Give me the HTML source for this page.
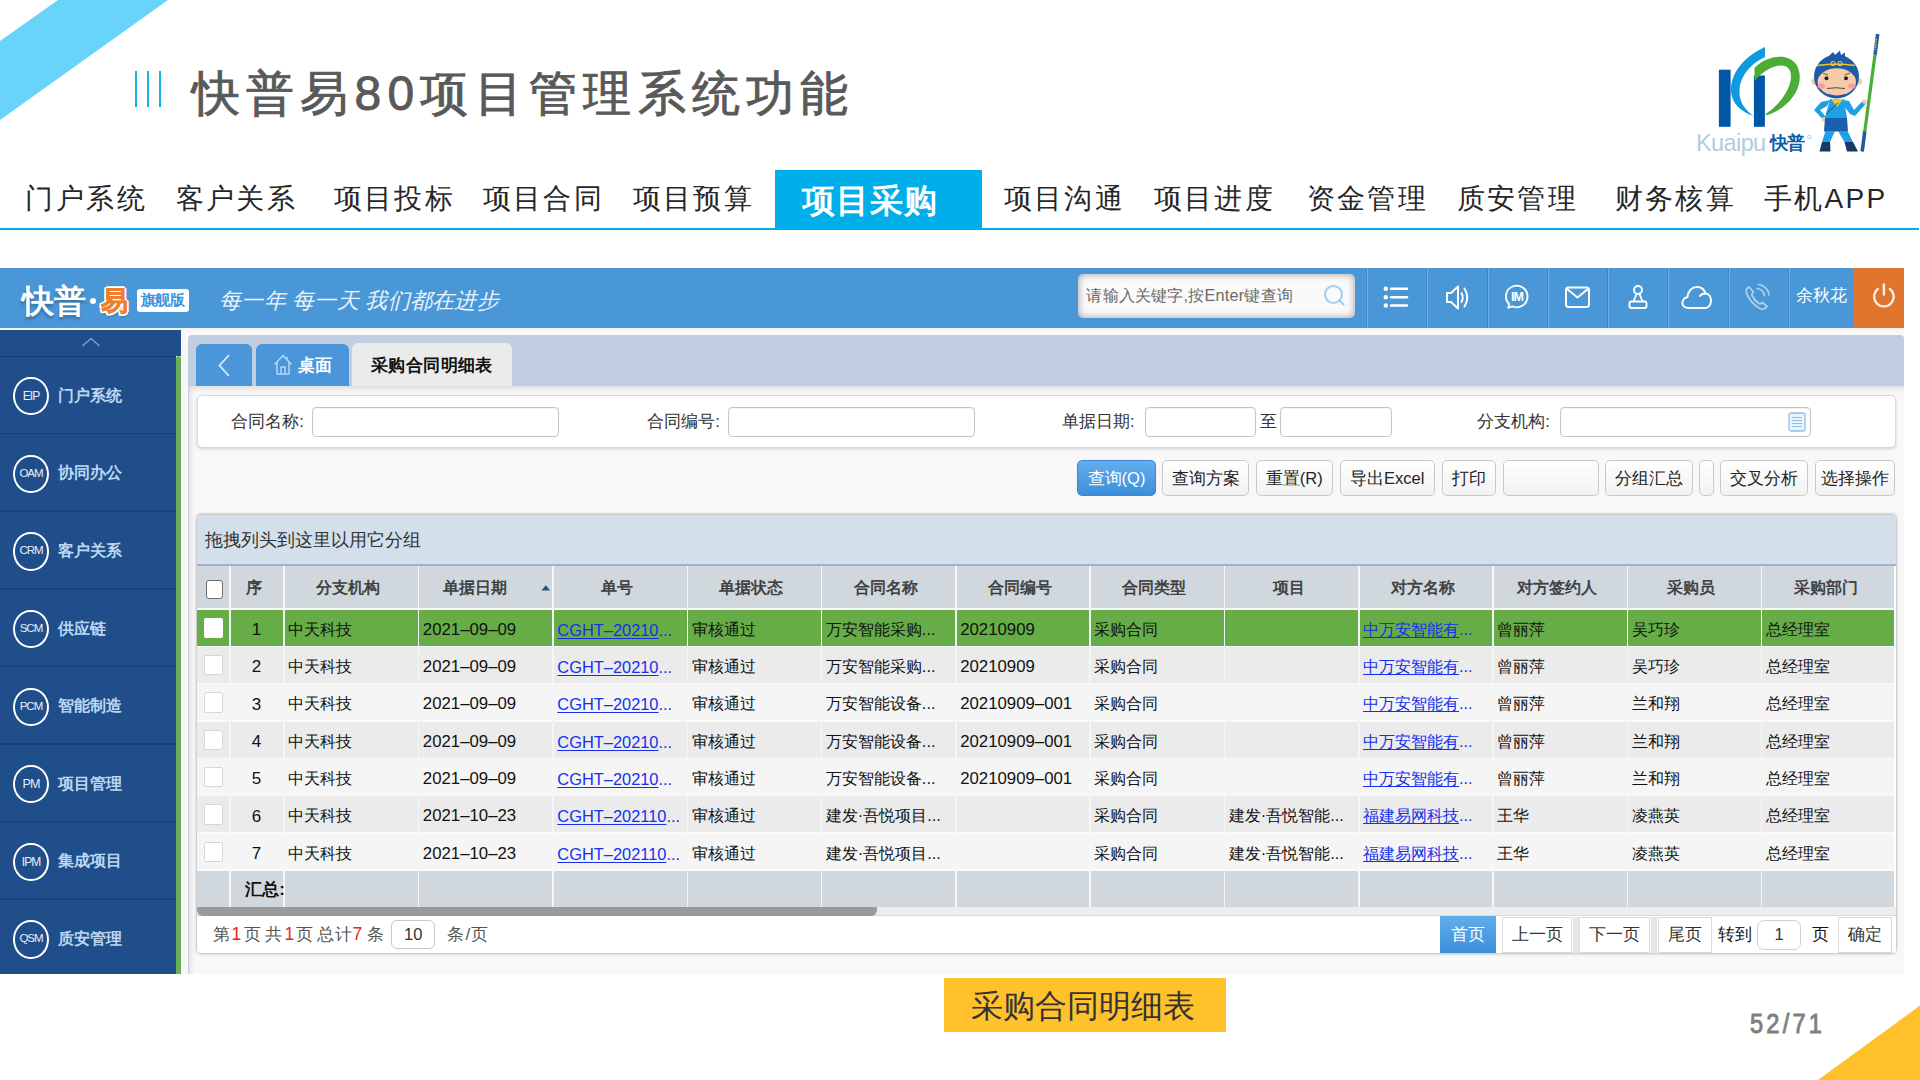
<!DOCTYPE html>
<html><head><meta charset="utf-8"><title>快普易80项目管理系统功能</title>
<style>
html,body{margin:0;padding:0;}
body{width:1920px;height:1080px;position:relative;overflow:hidden;background:#fff;font-family:"Liberation Sans",sans-serif;}
.t{position:absolute;white-space:nowrap;}
.r{position:absolute;box-sizing:border-box;}
svg{position:absolute;overflow:visible;}
</style></head><body>

<svg style="left:0;top:0" width="1920" height="1080"><polygon points="58,0 168,0 0,120 0,41" fill="#69D4FA"/><polygon points="1818,1080 1920,1005.6 1920,1080" fill="#FFC12B"/></svg>
<div class="r" style="left:134.50px;top:71.00px;width:2.00px;height:36.00px;background:#19B1EB;"></div>
<div class="r" style="left:146.50px;top:71.00px;width:2.00px;height:36.00px;background:#19B1EB;"></div>
<div class="r" style="left:158.50px;top:71.00px;width:2.00px;height:36.00px;background:#19B1EB;"></div>
<div class="t" style="left:191.50px;top:70.00px;font-size:48px;line-height:48px;color:#595959;font-weight:normal;letter-spacing:6.3px;-webkit-text-stroke:0.9px #595959">快普易80项目管理系统功能</div>
<div class="r" style="left:775.00px;top:170.00px;width:207.00px;height:59.00px;background:#00AEEA;"></div>
<div class="r" style="left:0.00px;top:227.50px;width:1919.00px;height:2.00px;background:#00AEEA;"></div>
<div class="t" style="left:25.48px;top:185.30px;font-size:28px;line-height:28px;color:#262626;font-weight:normal;letter-spacing:2.4px;">门户系统</div>
<div class="t" style="left:175.68px;top:185.30px;font-size:28px;line-height:28px;color:#262626;font-weight:normal;letter-spacing:2.4px;">客户关系</div>
<div class="t" style="left:333.68px;top:185.30px;font-size:28px;line-height:28px;color:#262626;font-weight:normal;letter-spacing:2.4px;">项目投标</div>
<div class="t" style="left:482.68px;top:185.30px;font-size:28px;line-height:28px;color:#262626;font-weight:normal;letter-spacing:2.4px;">项目合同</div>
<div class="t" style="left:632.68px;top:185.30px;font-size:28px;line-height:28px;color:#262626;font-weight:normal;letter-spacing:2.4px;">项目预算</div>
<div class="t" style="left:1003.68px;top:185.30px;font-size:28px;line-height:28px;color:#262626;font-weight:normal;letter-spacing:2.4px;">项目沟通</div>
<div class="t" style="left:1153.68px;top:185.30px;font-size:28px;line-height:28px;color:#262626;font-weight:normal;letter-spacing:2.4px;">项目进度</div>
<div class="t" style="left:1306.68px;top:185.30px;font-size:28px;line-height:28px;color:#262626;font-weight:normal;letter-spacing:2.4px;">资金管理</div>
<div class="t" style="left:1456.68px;top:185.30px;font-size:28px;line-height:28px;color:#262626;font-weight:normal;letter-spacing:2.4px;">质安管理</div>
<div class="t" style="left:1614.68px;top:185.30px;font-size:28px;line-height:28px;color:#262626;font-weight:normal;letter-spacing:2.4px;">财务核算</div>
<div class="t" style="left:1763.68px;top:185.30px;font-size:28px;line-height:28px;color:#262626;font-weight:normal;letter-spacing:2.4px;">手机APP</div>
<div class="t" style="left:801.68px;top:183.50px;font-size:33px;line-height:33px;color:#fff;font-weight:bold;letter-spacing:1px;">项目采购</div>
<svg style="left:1690px;top:30px" width="200" height="135" viewBox="0 0 200 135">
<rect x="28.9" y="39.7" width="11.7" height="57.1" fill="#0057A8"/>
<path d="M75 17 L75 27 C62 33 50 45 49.5 61 C49 72 55 80 63.5 86 C51 82 41.5 73 41 61 C40.5 44 53 27 75 17 Z" fill="#0D9AE0"/>
<rect x="63.9" y="45.5" width="11" height="51.3" fill="#0057A8"/>
<path d="M64.5 38 C72 30 84 26 94 27 C106 29 111 39 109.5 51 C107.5 66 94 80 76 85.5 L75.5 84 C88 76 98 63 100.5 51 C102.5 41 98 35 91 35.5 C82 36 72 42 64.5 51 Z" fill="#4BAD35"/>
<text x="6" y="120.5" font-family="Liberation Sans" font-size="23.5" fill="#B5CCDD" letter-spacing="-0.6">Kuaipu</text>
<text x="79.5" y="119" font-size="17.5" font-weight="bold" fill="#0A5BAA" letter-spacing="-0.3">快普</text>
<circle cx="119.5" cy="107" r="1.8" fill="none" stroke="#9BB9D6" stroke-width="0.7"/>
<!-- staff -->
<line x1="187.7" y1="4" x2="185" y2="24.8" stroke="#1E5BA5" stroke-width="3.6"/>
<line x1="185" y1="24.8" x2="174.8" y2="101.3" stroke="#4BAD35" stroke-width="3.2"/>
<line x1="174.8" y1="101.3" x2="172.2" y2="121.4" stroke="#1E5BA5" stroke-width="3.6"/>
<path d="M186.5 9 L185 20" stroke="#E6C23A" stroke-width="1.4" stroke-dasharray="1.5 1"/>
<!-- arms -->
<path d="M140 70 L131 72 L124 80 L133.5 90 L136 87 L130 80 L137 76 Z" fill="#1FA0E6"/>
<path d="M153 70 L159 71 L164 80 L173 70.5 L176 73.5 L165 86 L160 84 L154 76 Z" fill="#1FA0E6"/>
<circle cx="133.8" cy="89.5" r="2.2" fill="#F7CBA8"/><circle cx="174.5" cy="71.5" r="2.3" fill="#F7CBA8"/>
<!-- torso -->
<path d="M140 69 L154 69 L157 88 L135 88 Z" fill="#1FA0E6"/>
<path d="M135 88 L157 88 L158 101.5 L134 101.5 Z" fill="#1A5EB0"/>
<path d="M135.5 101 L145 101 L140 112 L132 112 Z M148 101 L157.5 101 L163 112 L154.5 112 Z" fill="#1FA0E6"/>
<path d="M132 112 L140 112 L140.5 121.4 L129.5 121.4 Z M154.5 112 L163 112 L168 121.4 L157 121.4 Z" fill="#163A63"/>
<path d="M141 69 L153.3 69 L147 77 Z" fill="#F2C530"/>
<path d="M136 84 L148 73" stroke="#163A63" stroke-width="0.8"/>
<!-- head -->
<path d="M139 26 L143 22 L145 25 L150 20.5 L151 25 L155 22.5 L155 28 Z" fill="#1E5BA5"/>
<circle cx="124.5" cy="51.5" r="3.2" fill="#F7CBA8"/><circle cx="169" cy="51.5" r="3.2" fill="#F7CBA8"/>
<ellipse cx="146.5" cy="46.5" rx="22.5" ry="22" fill="#1E5BA5"/>
<ellipse cx="146.8" cy="51.8" rx="19.2" ry="13.6" fill="#F7CBA8"/>
<path d="M127 35.5 Q146.5 33 165 35.5" stroke="#F2C530" stroke-width="1.6" fill="none"/>
<circle cx="143" cy="33.5" r="2" fill="none" stroke="#F2C530" stroke-width="1.1"/><circle cx="150" cy="33.5" r="2" fill="none" stroke="#F2C530" stroke-width="1.1"/>
<circle cx="136.5" cy="48.2" r="2" fill="#222"/><circle cx="156" cy="48.2" r="2" fill="#222"/>
<path d="M132.5 43 L138 45 M160 43 L154.5 45" stroke="#3A3A3A" stroke-width="0.8"/>
<ellipse cx="131.3" cy="56" rx="3.8" ry="2.6" fill="#F59DA2"/><ellipse cx="161.8" cy="56" rx="3.8" ry="2.6" fill="#F59DA2"/>
<path d="M137 58.5 Q146 57 155 58.5" stroke="#3A3A3A" stroke-width="0.9" fill="none"/>
</svg>
<div class="r" style="left:0.00px;top:328.00px;width:1904.00px;height:645.50px;background:#F8F8F8;"></div>
<div class="r" style="left:0.00px;top:268.00px;width:1904.00px;height:60.00px;background:#4A97D7;"></div>
<div class="r" style="left:0.00px;top:328.00px;width:1904.00px;height:2.00px;background:#F0F4F8;"></div>
<div class="t" style="left:22px;top:281px;font-size:32px;line-height:40px;color:#fff;font-weight:bold;text-shadow:0 3px 3px rgba(0,0,0,0.25)">快普</div>
<div class="r" style="left:90.00px;top:298.00px;width:6.00px;height:6.00px;background:#fff;border-radius:3px"></div>
<div class="t" style="left:100.5px;top:284px;font-size:26.5px;line-height:34px;color:#EF7F2C;font-weight:bold;-webkit-text-stroke:0px;-webkit-text-stroke:0.6px #EF7F2C;text-shadow:1.5px 1.5px 0 #fff,-1.5px -1.5px 0 #fff,1.5px -1.5px 0 #fff,-1.5px 1.5px 0 #fff,0 2px 0 #fff,2px 0 0 #fff,-2px 0 0 #fff,0 -2px 0 #fff,0 3px 3px rgba(0,0,0,.3)">易</div>
<div class="r" style="left:137.00px;top:289.00px;width:52.00px;height:22.50px;background:#fff;border-radius:3px"></div>
<div class="t" style="left:140.92px;top:293.25px;font-size:14.5px;line-height:14.5px;color:#3D96DC;font-weight:bold;letter-spacing:-0.5px;">旗舰版</div>
<div class="t" style="left:219.12px;top:289.80px;font-size:22px;line-height:22px;color:#F4F8FC;font-weight:300;letter-spacing:0.25px;font-style:italic;opacity:.95">每一年&nbsp;每一天&nbsp;我们都在进步</div>
<div class="r" style="left:1078.00px;top:274.00px;width:277.00px;height:43.50px;background:#FAFAFA;border-radius:5px;box-shadow:inset 0 0 7px 1px rgba(0,0,0,.32)"></div>
<div class="t" style="left:1086.35px;top:286.65px;font-size:16.3px;line-height:16.3px;color:#6A6A6A;font-weight:normal;letter-spacing:0.2px;">请输入关键字,按Enter键查询</div>
<svg style="left:1323px;top:284px" width="24" height="24"><circle cx="10.5" cy="10.5" r="8.5" fill="none" stroke="#9FCDF0" stroke-width="2"/><line x1="16.5" y1="16.5" x2="20.5" y2="20.5" stroke="#9FCDF0" stroke-width="2.2" stroke-linecap="round"/></svg>
<div class="r" style="left:1365.50px;top:268.00px;width:1.00px;height:60.00px;background:#3E86C6;"></div>
<div class="r" style="left:1366.50px;top:268.00px;width:1.00px;height:60.00px;background:#6BB1EC;"></div>
<div class="r" style="left:1425.50px;top:268.00px;width:1.00px;height:60.00px;background:#3E86C6;"></div>
<div class="r" style="left:1426.50px;top:268.00px;width:1.00px;height:60.00px;background:#6BB1EC;"></div>
<div class="r" style="left:1486.50px;top:268.00px;width:1.00px;height:60.00px;background:#3E86C6;"></div>
<div class="r" style="left:1487.50px;top:268.00px;width:1.00px;height:60.00px;background:#6BB1EC;"></div>
<div class="r" style="left:1546.50px;top:268.00px;width:1.00px;height:60.00px;background:#3E86C6;"></div>
<div class="r" style="left:1547.50px;top:268.00px;width:1.00px;height:60.00px;background:#6BB1EC;"></div>
<div class="r" style="left:1606.50px;top:268.00px;width:1.00px;height:60.00px;background:#3E86C6;"></div>
<div class="r" style="left:1607.50px;top:268.00px;width:1.00px;height:60.00px;background:#6BB1EC;"></div>
<div class="r" style="left:1667.00px;top:268.00px;width:1.00px;height:60.00px;background:#3E86C6;"></div>
<div class="r" style="left:1668.00px;top:268.00px;width:1.00px;height:60.00px;background:#6BB1EC;"></div>
<div class="r" style="left:1727.50px;top:268.00px;width:1.00px;height:60.00px;background:#3E86C6;"></div>
<div class="r" style="left:1728.50px;top:268.00px;width:1.00px;height:60.00px;background:#6BB1EC;"></div>
<div class="r" style="left:1787.50px;top:268.00px;width:1.00px;height:60.00px;background:#3E86C6;"></div>
<div class="r" style="left:1788.50px;top:268.00px;width:1.00px;height:60.00px;background:#6BB1EC;"></div>
<div class="r" style="left:1853.50px;top:268.00px;width:50.50px;height:60.00px;background:#E0752E;"></div>
<svg style="left:1380px;top:282px" width="35" height="30">
<circle cx="5.8" cy="6.7" r="2.2" fill="#FFFFFF"/><circle cx="5.8" cy="15.2" r="2.2" fill="#FFFFFF"/><circle cx="5.8" cy="23.5" r="2.2" fill="#FFFFFF"/>
<line x1="11" y1="6.7" x2="27" y2="6.7" stroke="#FFFFFF" stroke-width="2.4" stroke-linecap="round"/>
<line x1="11" y1="15.2" x2="27" y2="15.2" stroke="#FFFFFF" stroke-width="2.4" stroke-linecap="round"/>
<line x1="11" y1="23.5" x2="27" y2="23.5" stroke="#FFFFFF" stroke-width="2.4" stroke-linecap="round"/></svg>
<svg style="left:1440px;top:282px" width="35" height="32">
<path d="M7 11 L11 11 L18 4.5 L18 26.5 L11 20 L7 20 Z" fill="none" stroke="#FFFFFF" stroke-width="2" stroke-linejoin="round"/>
<path d="M21.5 11 Q24 15.5 21.5 20" fill="none" stroke="#FFFFFF" stroke-width="2" stroke-linecap="round"/>
<path d="M24.5 6.5 Q30 15.5 24.5 24.5" fill="none" stroke="#FFFFFF" stroke-width="2" stroke-linecap="round"/></svg>
<svg style="left:1500px;top:282px" width="35" height="32">
<path d="M9.2 22.2 A10.8 10.8 0 1 1 12.5 24.4 L8.2 25.8 Z" fill="none" stroke="#FFFFFF" stroke-width="1.8" stroke-linejoin="round"/>
<text x="16.9" y="18.6" text-anchor="middle" font-family="Liberation Sans" font-weight="bold" font-size="12.5" fill="#FFFFFF" letter-spacing="-1">IM</text></svg>
<svg style="left:1560px;top:282px" width="35" height="32">
<rect x="6" y="5.5" width="23" height="19.5" rx="2.5" fill="none" stroke="#FFFFFF" stroke-width="2"/>
<path d="M6.5 6.5 L17.5 15.5 L28.5 6.5" fill="none" stroke="#FFFFFF" stroke-width="2" stroke-linejoin="round"/></svg>
<svg style="left:1620px;top:282px" width="35" height="32">
<circle cx="18" cy="8" r="4" fill="none" stroke="#FFFFFF" stroke-width="1.9"/>
<path d="M16.5 11.8 L13.5 19.5 M19.5 11.8 L22.5 19.5" stroke="#FFFFFF" stroke-width="1.8"/>
<rect x="9.5" y="19.5" width="17" height="6.5" rx="2" fill="none" stroke="#FFFFFF" stroke-width="1.9"/></svg>
<svg style="left:1680px;top:282px" width="35" height="32">
<path d="M8 26 C3 26 2 22 2.5 20 C3 16.5 6 15 7.5 15.2 C8 9 12 5 17 5 C21.5 5 24.5 8 25.5 11.5 C29 11.5 31 15 31 18.5 C31 23 28.5 26 25.5 26 Z" fill="none" stroke="#FFFFFF" stroke-width="1.9" stroke-linejoin="round"/>
<path d="M20 14 C21 12.5 23 11.5 25.5 11.5" fill="none" stroke="#FFFFFF" stroke-width="1.9" stroke-linecap="round"/></svg>
<svg style="left:1740px;top:282px;opacity:.55" width="35" height="32">
<path d="M9 5 C7 6 5.5 8 6.5 11 C8.5 17 14 23.5 20 26.5 C23 28 25.5 26.5 27 24.5 L22.5 20.5 C21.5 21.5 20.5 22.5 19 21.5 C16 19.5 13.5 16.5 12 13.5 C11.5 12 12.5 11 13.5 10 Z" fill="none" stroke="#FFFFFF" stroke-width="1.8" stroke-linejoin="round"/>
<path d="M17 6.5 C21 7 24 10 24.5 14" fill="none" stroke="#FFFFFF" stroke-width="1.6" stroke-linecap="round"/>
<path d="M18.5 2.5 C24 3 28.5 7.5 29 13" fill="none" stroke="#FFFFFF" stroke-width="1.6" stroke-linecap="round"/></svg>
<div class="t" style="left:1796.34px;top:287.45px;font-size:16.5px;line-height:16.5px;color:#fff;font-weight:normal;letter-spacing:0px;">余秋花</div>
<svg style="left:1870px;top:280px" width="28" height="28">
<path d="M8 8.8 A9.8 9.8 0 1 0 19.8 8.8" fill="none" stroke="#FBEFE6" stroke-width="2.2" stroke-linecap="round"/>
<line x1="13.9" y1="4.5" x2="13.9" y2="14.5" stroke="#FBEFE6" stroke-width="2.4" stroke-linecap="round"/></svg>
<div class="r" style="left:0.00px;top:330.00px;width:176.00px;height:643.50px;background:#1F4E8A;"></div>
<div class="r" style="left:176.00px;top:330.00px;width:5.00px;height:26.00px;background:#1F4E8A;"></div>
<div class="r" style="left:0.00px;top:355.50px;width:176.00px;height:1.50px;background:#173E6E;"></div>
<svg style="left:80px;top:334px" width="24" height="16"><path d="M2.5 12 L11 4.5 L19.5 12" fill="none" stroke="#7C9DC4" stroke-width="1.6"/></svg>
<div class="r" style="left:176.00px;top:356.00px;width:5.00px;height:617.50px;background:#6CAF5B;border-radius:3px 3px 0 0"></div>
<div class="r" style="left:0.00px;top:432.80px;width:176.00px;height:1.60px;background:#1A4273;"></div>
<div class="r" style="left:13.4px;top:377.10px;width:35.2px;height:38.4px;border:2px solid #fff;border-radius:50%"></div>
<div class="t" style="left:13.40px;width:35.20px;text-align:center;top:390.00px;font-size:12px;line-height:12px;color:#E8EEF6;font-weight:normal;letter-spacing:-1.0px;">EIP</div>
<div class="t" style="left:58.16px;top:387.70px;font-size:16px;line-height:16px;color:#BCD6F2;font-weight:bold;letter-spacing:0px;">门户系统</div>
<div class="r" style="left:0.00px;top:510.40px;width:176.00px;height:1.60px;background:#1A4273;"></div>
<div class="r" style="left:13.4px;top:454.70px;width:35.2px;height:38.4px;border:2px solid #fff;border-radius:50%"></div>
<div class="t" style="left:13.40px;width:35.20px;text-align:center;top:467.88px;font-size:11.5px;line-height:11.5px;color:#E8EEF6;font-weight:normal;letter-spacing:-1.0px;">OAM</div>
<div class="t" style="left:58.16px;top:465.30px;font-size:16px;line-height:16px;color:#BCD6F2;font-weight:bold;letter-spacing:0px;">协同办公</div>
<div class="r" style="left:0.00px;top:588.00px;width:176.00px;height:1.60px;background:#1A4273;"></div>
<div class="r" style="left:13.4px;top:532.30px;width:35.2px;height:38.4px;border:2px solid #fff;border-radius:50%"></div>
<div class="t" style="left:13.40px;width:35.20px;text-align:center;top:545.47px;font-size:11.5px;line-height:11.5px;color:#E8EEF6;font-weight:normal;letter-spacing:-1.0px;">CRM</div>
<div class="t" style="left:58.16px;top:542.90px;font-size:16px;line-height:16px;color:#BCD6F2;font-weight:bold;letter-spacing:0px;">客户关系</div>
<div class="r" style="left:0.00px;top:665.60px;width:176.00px;height:1.60px;background:#1A4273;"></div>
<div class="r" style="left:13.4px;top:609.90px;width:35.2px;height:38.4px;border:2px solid #fff;border-radius:50%"></div>
<div class="t" style="left:13.40px;width:35.20px;text-align:center;top:623.07px;font-size:11.5px;line-height:11.5px;color:#E8EEF6;font-weight:normal;letter-spacing:-1.0px;">SCM</div>
<div class="t" style="left:58.16px;top:620.50px;font-size:16px;line-height:16px;color:#BCD6F2;font-weight:bold;letter-spacing:0px;">供应链</div>
<div class="r" style="left:0.00px;top:743.20px;width:176.00px;height:1.60px;background:#1A4273;"></div>
<div class="r" style="left:13.4px;top:687.50px;width:35.2px;height:38.4px;border:2px solid #fff;border-radius:50%"></div>
<div class="t" style="left:13.40px;width:35.20px;text-align:center;top:700.67px;font-size:11.5px;line-height:11.5px;color:#E8EEF6;font-weight:normal;letter-spacing:-1.0px;">PCM</div>
<div class="t" style="left:58.16px;top:698.10px;font-size:16px;line-height:16px;color:#BCD6F2;font-weight:bold;letter-spacing:0px;">智能制造</div>
<div class="r" style="left:0.00px;top:820.80px;width:176.00px;height:1.60px;background:#1A4273;"></div>
<div class="r" style="left:13.4px;top:765.10px;width:35.2px;height:38.4px;border:2px solid #fff;border-radius:50%"></div>
<div class="t" style="left:13.40px;width:35.20px;text-align:center;top:777.72px;font-size:12.5px;line-height:12.5px;color:#E8EEF6;font-weight:normal;letter-spacing:-1.0px;">PM</div>
<div class="t" style="left:58.16px;top:775.70px;font-size:16px;line-height:16px;color:#BCD6F2;font-weight:bold;letter-spacing:0px;">项目管理</div>
<div class="r" style="left:0.00px;top:898.40px;width:176.00px;height:1.60px;background:#1A4273;"></div>
<div class="r" style="left:13.4px;top:842.70px;width:35.2px;height:38.4px;border:2px solid #fff;border-radius:50%"></div>
<div class="t" style="left:13.40px;width:35.20px;text-align:center;top:855.60px;font-size:12px;line-height:12px;color:#E8EEF6;font-weight:normal;letter-spacing:-1.0px;">IPM</div>
<div class="t" style="left:58.16px;top:853.30px;font-size:16px;line-height:16px;color:#BCD6F2;font-weight:bold;letter-spacing:0px;">集成项目</div>
<div class="r" style="left:13.4px;top:920.30px;width:35.2px;height:38.4px;border:2px solid #fff;border-radius:50%"></div>
<div class="t" style="left:13.40px;width:35.20px;text-align:center;top:933.47px;font-size:11.5px;line-height:11.5px;color:#E8EEF6;font-weight:normal;letter-spacing:-1.0px;">QSM</div>
<div class="t" style="left:58.16px;top:930.90px;font-size:16px;line-height:16px;color:#BCD6F2;font-weight:bold;letter-spacing:0px;">质安管理</div>
<div class="r" style="left:188.00px;top:335.00px;width:1716.00px;height:51.00px;background:#C1CDE0;border-radius:4px 4px 0 0"></div>
<div class="r" style="left:188.00px;top:386.00px;width:1716.00px;height:587.50px;background:#F8F8F8;border-left:1px solid #C9D2DE;box-shadow:inset 4px 5px 6px -3px rgba(0,0,0,.13)"></div>
<div class="r" style="left:196.00px;top:344.00px;width:56.00px;height:42.00px;background:#4A96D8;border-radius:6px 6px 0 0"></div>
<svg style="left:214px;top:352px" width="20" height="28"><path d="M15 3 L5.5 13.5 L15 24" fill="none" stroke="#DCEBF8" stroke-width="1.8"/></svg>
<div class="r" style="left:255.50px;top:344.00px;width:93.50px;height:42.00px;background:#4A96D8;border-radius:6px 6px 0 0"></div>
<svg style="left:272px;top:352px" width="24" height="26"><path d="M2.5 12.5 L11 3.5 L19.5 12.5 M5 10 L5 22 L17 22 L17 10 M9 22 L9 15 L13 15 L13 22 M15 5 L15 8" fill="none" stroke="#B9D6F2" stroke-width="1.5" stroke-linejoin="round"/></svg>
<div class="t" style="left:298.34px;top:356.75px;font-size:16.5px;line-height:16.5px;color:#fff;font-weight:bold;letter-spacing:0px;">桌面</div>
<div class="r" style="left:352.00px;top:343.00px;width:160.00px;height:43.00px;background:#EBEBEB;border-radius:6px 6px 0 0"></div>
<div class="t" style="left:370.81px;top:356.65px;font-size:17.3px;line-height:17.3px;color:#111;font-weight:bold;letter-spacing:0.45px;">采购合同明细表</div>
<div class="r" style="left:196.50px;top:394.50px;width:1699.50px;height:53.00px;background:#fff;border:1px solid #D3D9E0;border-radius:5px;box-shadow:0 1px 3px rgba(0,0,0,.16)"></div>
<div class="t" style="left:231.34px;top:413.05px;font-size:16.5px;line-height:16.5px;color:#333;font-weight:normal;letter-spacing:0px;">合同名称:</div>
<div class="t" style="left:647.34px;top:413.05px;font-size:16.5px;line-height:16.5px;color:#333;font-weight:normal;letter-spacing:0px;">合同编号:</div>
<div class="t" style="left:1061.94px;top:413.05px;font-size:16.5px;line-height:16.5px;color:#333;font-weight:normal;letter-spacing:0px;">单据日期:</div>
<div class="t" style="left:1477.34px;top:413.05px;font-size:16.5px;line-height:16.5px;color:#333;font-weight:normal;letter-spacing:0px;">分支机构:</div>
<div class="r" style="left:312.00px;top:407.00px;width:247.00px;height:29.50px;background:#fff;border:1px solid #C4C4C4;border-radius:4px;box-shadow:inset 0 1px 1px rgba(0,0,0,.06)"></div>
<div class="r" style="left:728.00px;top:407.00px;width:247.00px;height:29.50px;background:#fff;border:1px solid #C4C4C4;border-radius:4px;box-shadow:inset 0 1px 1px rgba(0,0,0,.06)"></div>
<div class="r" style="left:1145.00px;top:407.00px;width:111.00px;height:29.50px;background:#fff;border:1px solid #C4C4C4;border-radius:4px;box-shadow:inset 0 1px 1px rgba(0,0,0,.06)"></div>
<div class="r" style="left:1280.00px;top:407.00px;width:112.00px;height:29.50px;background:#fff;border:1px solid #C4C4C4;border-radius:4px;box-shadow:inset 0 1px 1px rgba(0,0,0,.06)"></div>
<div class="r" style="left:1560.00px;top:407.00px;width:251.00px;height:29.50px;background:#fff;border:1px solid #C4C4C4;border-radius:4px;box-shadow:inset 0 1px 1px rgba(0,0,0,.06)"></div>
<div class="t" style="left:1260.34px;top:413.05px;font-size:16.5px;line-height:16.5px;color:#333;font-weight:normal;letter-spacing:0px;">至</div>
<svg style="left:1788px;top:412px" width="19" height="21"><rect x="1" y="1" width="16" height="18" rx="2" fill="#EAF3FC" stroke="#8EC0EC" stroke-width="1.3"/><path d="M4 5.5 L14 5.5 M4 8.5 L14 8.5 M4 11.5 L14 11.5 M4 14.5 L14 14.5" stroke="#8EC0EC" stroke-width="1.1"/></svg>
<div class="r" style="left:1077.00px;top:459.50px;width:79.00px;height:36.50px;background:linear-gradient(#62AEEB,#3D8FDC);border:1px solid #3A88D2;border-radius:5px"></div>
<div class="t" style="left:1077.00px;width:79.00px;text-align:center;top:469.95px;font-size:16.5px;line-height:16.5px;color:#fff;font-weight:normal;letter-spacing:0px;">查询(Q)</div>
<div class="r" style="left:1162.00px;top:459.50px;width:87.00px;height:36.50px;background:linear-gradient(#FFFFFF,#F2F2F2);border:1px solid #C9C9C9;border-radius:5px"></div>
<div class="t" style="left:1162.00px;width:87.00px;text-align:center;top:469.95px;font-size:16.5px;line-height:16.5px;color:#222;font-weight:normal;letter-spacing:0px;">查询方案</div>
<div class="r" style="left:1256.00px;top:459.50px;width:76.50px;height:36.50px;background:linear-gradient(#FFFFFF,#F2F2F2);border:1px solid #C9C9C9;border-radius:5px"></div>
<div class="t" style="left:1256.00px;width:76.50px;text-align:center;top:469.95px;font-size:16.5px;line-height:16.5px;color:#222;font-weight:normal;letter-spacing:0px;">重置(R)</div>
<div class="r" style="left:1339.50px;top:459.50px;width:95.50px;height:36.50px;background:linear-gradient(#FFFFFF,#F2F2F2);border:1px solid #C9C9C9;border-radius:5px"></div>
<div class="t" style="left:1339.50px;width:95.50px;text-align:center;top:469.95px;font-size:16.5px;line-height:16.5px;color:#222;font-weight:normal;letter-spacing:0px;">导出Excel</div>
<div class="r" style="left:1442.00px;top:459.50px;width:54.00px;height:36.50px;background:linear-gradient(#FFFFFF,#F2F2F2);border:1px solid #C9C9C9;border-radius:5px"></div>
<div class="t" style="left:1442.00px;width:54.00px;text-align:center;top:469.95px;font-size:16.5px;line-height:16.5px;color:#222;font-weight:normal;letter-spacing:0px;">打印</div>
<div class="r" style="left:1503.00px;top:459.50px;width:95.50px;height:36.50px;background:linear-gradient(#FFFFFF,#F2F2F2);border:1px solid #C9C9C9;border-radius:5px"></div>
<div class="r" style="left:1605.00px;top:459.50px;width:87.50px;height:36.50px;background:linear-gradient(#FFFFFF,#F2F2F2);border:1px solid #C9C9C9;border-radius:5px"></div>
<div class="t" style="left:1605.00px;width:87.50px;text-align:center;top:469.95px;font-size:16.5px;line-height:16.5px;color:#222;font-weight:normal;letter-spacing:0px;">分组汇总</div>
<div class="r" style="left:1699.00px;top:459.50px;width:15.00px;height:36.50px;background:linear-gradient(#FFFFFF,#F2F2F2);border:1px solid #C9C9C9;border-radius:5px"></div>
<div class="r" style="left:1720.00px;top:459.50px;width:88.00px;height:36.50px;background:linear-gradient(#FFFFFF,#F2F2F2);border:1px solid #C9C9C9;border-radius:5px"></div>
<div class="t" style="left:1720.00px;width:88.00px;text-align:center;top:469.95px;font-size:16.5px;line-height:16.5px;color:#222;font-weight:normal;letter-spacing:0px;">交叉分析</div>
<div class="r" style="left:1814.50px;top:459.50px;width:80.00px;height:36.50px;background:linear-gradient(#FFFFFF,#F2F2F2);border:1px solid #C9C9C9;border-radius:5px"></div>
<div class="t" style="left:1814.50px;width:80.00px;text-align:center;top:469.95px;font-size:16.5px;line-height:16.5px;color:#222;font-weight:normal;letter-spacing:0px;">选择操作</div>
<div class="r" style="left:197.00px;top:515.00px;width:1699.00px;height:438.00px;background:#fff;border-radius:4px;box-shadow:0 -1px 3px rgba(0,0,0,.28), 0 1px 3px rgba(0,0,0,.2)"></div>
<div class="r" style="left:197.00px;top:515.00px;width:1699.00px;height:50.50px;background:#D3DFEB;border-radius:4px 4px 0 0"></div>
<div class="r" style="left:197.00px;top:564.30px;width:1699.00px;height:1.70px;background:#9DB3CC;"></div>
<div class="t" style="left:205.29px;top:531.60px;font-size:17.8px;line-height:17.8px;color:#333;font-weight:normal;letter-spacing:0px;">拖拽列头到这里以用它分组</div>
<div class="r" style="left:197.00px;top:566.00px;width:1699.00px;height:42.00px;background:#D0D8DE;"></div>
<div class="r" style="left:197.00px;top:608.00px;width:1699.00px;height:1.70px;background:#F8F8F8;"></div>
<div class="r" style="left:197.00px;top:609.70px;width:1699.00px;height:35.91px;background:#66AD47;"></div>
<div class="r" style="left:197.00px;top:645.61px;width:1699.00px;height:1.40px;background:#FAFAFA;"></div>
<div class="r" style="left:197.00px;top:647.01px;width:1699.00px;height:35.91px;background:#EBEBEB;"></div>
<div class="r" style="left:197.00px;top:682.92px;width:1699.00px;height:1.40px;background:#FAFAFA;"></div>
<div class="r" style="left:197.00px;top:684.32px;width:1699.00px;height:35.91px;background:#F5F5F5;"></div>
<div class="r" style="left:197.00px;top:720.23px;width:1699.00px;height:1.40px;background:#FAFAFA;"></div>
<div class="r" style="left:197.00px;top:721.63px;width:1699.00px;height:35.91px;background:#EBEBEB;"></div>
<div class="r" style="left:197.00px;top:757.54px;width:1699.00px;height:1.40px;background:#FAFAFA;"></div>
<div class="r" style="left:197.00px;top:758.94px;width:1699.00px;height:35.91px;background:#F5F5F5;"></div>
<div class="r" style="left:197.00px;top:794.85px;width:1699.00px;height:1.40px;background:#FAFAFA;"></div>
<div class="r" style="left:197.00px;top:796.25px;width:1699.00px;height:35.91px;background:#EBEBEB;"></div>
<div class="r" style="left:197.00px;top:832.16px;width:1699.00px;height:1.40px;background:#FAFAFA;"></div>
<div class="r" style="left:197.00px;top:833.56px;width:1699.00px;height:35.91px;background:#F5F5F5;"></div>
<div class="r" style="left:197.00px;top:869.47px;width:1699.00px;height:1.40px;background:#FAFAFA;"></div>
<div class="r" style="left:197.00px;top:870.87px;width:1699.00px;height:36.13px;background:#D0D8DE;"></div>
<div class="r" style="left:229.40px;top:566.00px;width:1.60px;height:341.00px;background:#F4F6F7;"></div>
<div class="r" style="left:283.30px;top:566.00px;width:1.60px;height:341.00px;background:#F4F6F7;"></div>
<div class="r" style="left:417.80px;top:566.00px;width:1.60px;height:341.00px;background:#F4F6F7;"></div>
<div class="r" style="left:552.30px;top:566.00px;width:1.60px;height:341.00px;background:#F4F6F7;"></div>
<div class="r" style="left:686.60px;top:566.00px;width:1.60px;height:341.00px;background:#F4F6F7;"></div>
<div class="r" style="left:820.80px;top:566.00px;width:1.60px;height:341.00px;background:#F4F6F7;"></div>
<div class="r" style="left:955.10px;top:566.00px;width:1.60px;height:341.00px;background:#F4F6F7;"></div>
<div class="r" style="left:1089.40px;top:566.00px;width:1.60px;height:341.00px;background:#F4F6F7;"></div>
<div class="r" style="left:1223.70px;top:566.00px;width:1.60px;height:341.00px;background:#F4F6F7;"></div>
<div class="r" style="left:1358.00px;top:566.00px;width:1.60px;height:341.00px;background:#F4F6F7;"></div>
<div class="r" style="left:1492.30px;top:566.00px;width:1.60px;height:341.00px;background:#F4F6F7;"></div>
<div class="r" style="left:1626.60px;top:566.00px;width:1.60px;height:341.00px;background:#F4F6F7;"></div>
<div class="r" style="left:1760.90px;top:566.00px;width:1.60px;height:341.00px;background:#F4F6F7;"></div>
<div class="r" style="left:1894.40px;top:566.00px;width:1.60px;height:341.00px;background:#FFFFFF;"></div>
<div class="t" style="left:227.10px;width:53.90px;text-align:center;top:578.80px;font-size:16.4px;line-height:16.4px;color:#3A3A3A;font-weight:normal;letter-spacing:0px;-webkit-text-stroke:0.55px #3A3A3A">序</div>
<div class="t" style="left:281.00px;width:134.50px;text-align:center;top:578.80px;font-size:16.4px;line-height:16.4px;color:#3A3A3A;font-weight:normal;letter-spacing:0px;-webkit-text-stroke:0.55px #3A3A3A">分支机构</div>
<div class="t" style="left:408.00px;width:134.50px;text-align:center;top:578.80px;font-size:16.4px;line-height:16.4px;color:#3A3A3A;font-weight:normal;letter-spacing:0px;-webkit-text-stroke:0.55px #3A3A3A">单据日期</div>
<div class="t" style="left:550.00px;width:134.30px;text-align:center;top:578.80px;font-size:16.4px;line-height:16.4px;color:#3A3A3A;font-weight:normal;letter-spacing:0px;-webkit-text-stroke:0.55px #3A3A3A">单号</div>
<div class="t" style="left:684.30px;width:134.20px;text-align:center;top:578.80px;font-size:16.4px;line-height:16.4px;color:#3A3A3A;font-weight:normal;letter-spacing:0px;-webkit-text-stroke:0.55px #3A3A3A">单据状态</div>
<div class="t" style="left:818.50px;width:134.30px;text-align:center;top:578.80px;font-size:16.4px;line-height:16.4px;color:#3A3A3A;font-weight:normal;letter-spacing:0px;-webkit-text-stroke:0.55px #3A3A3A">合同名称</div>
<div class="t" style="left:952.80px;width:134.30px;text-align:center;top:578.80px;font-size:16.4px;line-height:16.4px;color:#3A3A3A;font-weight:normal;letter-spacing:0px;-webkit-text-stroke:0.55px #3A3A3A">合同编号</div>
<div class="t" style="left:1087.10px;width:134.30px;text-align:center;top:578.80px;font-size:16.4px;line-height:16.4px;color:#3A3A3A;font-weight:normal;letter-spacing:0px;-webkit-text-stroke:0.55px #3A3A3A">合同类型</div>
<div class="t" style="left:1221.40px;width:134.30px;text-align:center;top:578.80px;font-size:16.4px;line-height:16.4px;color:#3A3A3A;font-weight:normal;letter-spacing:0px;-webkit-text-stroke:0.55px #3A3A3A">项目</div>
<div class="t" style="left:1355.70px;width:134.30px;text-align:center;top:578.80px;font-size:16.4px;line-height:16.4px;color:#3A3A3A;font-weight:normal;letter-spacing:0px;-webkit-text-stroke:0.55px #3A3A3A">对方名称</div>
<div class="t" style="left:1490.00px;width:134.30px;text-align:center;top:578.80px;font-size:16.4px;line-height:16.4px;color:#3A3A3A;font-weight:normal;letter-spacing:0px;-webkit-text-stroke:0.55px #3A3A3A">对方签约人</div>
<div class="t" style="left:1624.30px;width:134.30px;text-align:center;top:578.80px;font-size:16.4px;line-height:16.4px;color:#3A3A3A;font-weight:normal;letter-spacing:0px;-webkit-text-stroke:0.55px #3A3A3A">采购员</div>
<div class="t" style="left:1758.60px;width:134.30px;text-align:center;top:578.80px;font-size:16.4px;line-height:16.4px;color:#3A3A3A;font-weight:normal;letter-spacing:0px;-webkit-text-stroke:0.55px #3A3A3A">采购部门</div>
<div class="r" style="left:205.5px;top:580px;width:17.5px;height:19px;background:#fff;border:1px solid #6F6F6F;border-radius:3px"></div>
<svg style="left:540px;top:583px" width="12" height="9"><path d="M1.5 7.5 L5.8 2.2 L10.1 7.5 Z" fill="#2F4E78"/></svg>
<div class="r" style="left:204px;top:617.66px;width:19px;height:20.5px;background:#fff;border:none;border-radius:2px"></div>
<div class="t" style="left:229.60px;width:53.90px;text-align:center;top:620.96px;font-size:17px;line-height:17px;color:#111;font-weight:normal;letter-spacing:0px;">1</div>
<div class="t" style="left:288.37px;top:620.71px;font-size:16.3px;line-height:16.3px;color:#111;font-weight:normal;letter-spacing:0px;">中天科技</div>
<div class="t" style="left:422.86px;top:621.66px;font-size:16.8px;line-height:16.8px;color:#111;font-weight:normal;letter-spacing:0px;">2021–09–09</div>
<div class="t" style="left:557.37px;top:621.86px;font-size:16.4px;line-height:16.4px;color:#1430EE;font-weight:normal;letter-spacing:0px;"><span style="text-decoration:underline;text-underline-offset:2px">CGHT–20210</span>...</div>
<div class="t" style="left:691.67px;top:620.71px;font-size:16.3px;line-height:16.3px;color:#111;font-weight:normal;letter-spacing:0px;">审核通过</div>
<div class="t" style="left:825.87px;top:620.71px;font-size:16.3px;line-height:16.3px;color:#111;font-weight:normal;letter-spacing:0px;">万安智能采购...</div>
<div class="t" style="left:960.16px;top:621.66px;font-size:16.8px;line-height:16.8px;color:#111;font-weight:normal;letter-spacing:0px;">20210909</div>
<div class="t" style="left:1094.47px;top:620.71px;font-size:16.3px;line-height:16.3px;color:#111;font-weight:normal;letter-spacing:0px;">采购合同</div>
<div class="t" style="left:1363.07px;top:620.71px;font-size:16.3px;line-height:16.3px;color:#1430EE;font-weight:normal;letter-spacing:0px;"><span style="text-decoration:underline;text-underline-offset:2px">中万安智能有</span>...</div>
<div class="t" style="left:1497.37px;top:620.71px;font-size:16.3px;line-height:16.3px;color:#111;font-weight:normal;letter-spacing:0px;">曾丽萍</div>
<div class="t" style="left:1631.67px;top:620.71px;font-size:16.3px;line-height:16.3px;color:#111;font-weight:normal;letter-spacing:0px;">吴巧珍</div>
<div class="t" style="left:1765.97px;top:620.71px;font-size:16.3px;line-height:16.3px;color:#111;font-weight:normal;letter-spacing:0px;">总经理室</div>
<div class="r" style="left:204px;top:654.97px;width:19px;height:20.5px;background:#fff;border:1px solid #D6D6D6;border-radius:2px"></div>
<div class="t" style="left:229.60px;width:53.90px;text-align:center;top:658.26px;font-size:17px;line-height:17px;color:#111;font-weight:normal;letter-spacing:0px;">2</div>
<div class="t" style="left:288.37px;top:658.01px;font-size:16.3px;line-height:16.3px;color:#111;font-weight:normal;letter-spacing:0px;">中天科技</div>
<div class="t" style="left:422.86px;top:658.97px;font-size:16.8px;line-height:16.8px;color:#111;font-weight:normal;letter-spacing:0px;">2021–09–09</div>
<div class="t" style="left:557.37px;top:659.16px;font-size:16.4px;line-height:16.4px;color:#1430EE;font-weight:normal;letter-spacing:0px;"><span style="text-decoration:underline;text-underline-offset:2px">CGHT–20210</span>...</div>
<div class="t" style="left:691.67px;top:658.01px;font-size:16.3px;line-height:16.3px;color:#111;font-weight:normal;letter-spacing:0px;">审核通过</div>
<div class="t" style="left:825.87px;top:658.01px;font-size:16.3px;line-height:16.3px;color:#111;font-weight:normal;letter-spacing:0px;">万安智能采购...</div>
<div class="t" style="left:960.16px;top:658.97px;font-size:16.8px;line-height:16.8px;color:#111;font-weight:normal;letter-spacing:0px;">20210909</div>
<div class="t" style="left:1094.47px;top:658.01px;font-size:16.3px;line-height:16.3px;color:#111;font-weight:normal;letter-spacing:0px;">采购合同</div>
<div class="t" style="left:1363.07px;top:658.01px;font-size:16.3px;line-height:16.3px;color:#1430EE;font-weight:normal;letter-spacing:0px;"><span style="text-decoration:underline;text-underline-offset:2px">中万安智能有</span>...</div>
<div class="t" style="left:1497.37px;top:658.01px;font-size:16.3px;line-height:16.3px;color:#111;font-weight:normal;letter-spacing:0px;">曾丽萍</div>
<div class="t" style="left:1631.67px;top:658.01px;font-size:16.3px;line-height:16.3px;color:#111;font-weight:normal;letter-spacing:0px;">吴巧珍</div>
<div class="t" style="left:1765.97px;top:658.01px;font-size:16.3px;line-height:16.3px;color:#111;font-weight:normal;letter-spacing:0px;">总经理室</div>
<div class="r" style="left:204px;top:692.28px;width:19px;height:20.5px;background:#fff;border:1px solid #D6D6D6;border-radius:2px"></div>
<div class="t" style="left:229.60px;width:53.90px;text-align:center;top:695.58px;font-size:17px;line-height:17px;color:#111;font-weight:normal;letter-spacing:0px;">3</div>
<div class="t" style="left:288.37px;top:695.33px;font-size:16.3px;line-height:16.3px;color:#111;font-weight:normal;letter-spacing:0px;">中天科技</div>
<div class="t" style="left:422.86px;top:696.28px;font-size:16.8px;line-height:16.8px;color:#111;font-weight:normal;letter-spacing:0px;">2021–09–09</div>
<div class="t" style="left:557.37px;top:696.48px;font-size:16.4px;line-height:16.4px;color:#1430EE;font-weight:normal;letter-spacing:0px;"><span style="text-decoration:underline;text-underline-offset:2px">CGHT–20210</span>...</div>
<div class="t" style="left:691.67px;top:695.33px;font-size:16.3px;line-height:16.3px;color:#111;font-weight:normal;letter-spacing:0px;">审核通过</div>
<div class="t" style="left:825.87px;top:695.33px;font-size:16.3px;line-height:16.3px;color:#111;font-weight:normal;letter-spacing:0px;">万安智能设备...</div>
<div class="t" style="left:960.16px;top:696.28px;font-size:16.8px;line-height:16.8px;color:#111;font-weight:normal;letter-spacing:0px;">20210909–001</div>
<div class="t" style="left:1094.47px;top:695.33px;font-size:16.3px;line-height:16.3px;color:#111;font-weight:normal;letter-spacing:0px;">采购合同</div>
<div class="t" style="left:1363.07px;top:695.33px;font-size:16.3px;line-height:16.3px;color:#1430EE;font-weight:normal;letter-spacing:0px;"><span style="text-decoration:underline;text-underline-offset:2px">中万安智能有</span>...</div>
<div class="t" style="left:1497.37px;top:695.33px;font-size:16.3px;line-height:16.3px;color:#111;font-weight:normal;letter-spacing:0px;">曾丽萍</div>
<div class="t" style="left:1631.67px;top:695.33px;font-size:16.3px;line-height:16.3px;color:#111;font-weight:normal;letter-spacing:0px;">兰和翔</div>
<div class="t" style="left:1765.97px;top:695.33px;font-size:16.3px;line-height:16.3px;color:#111;font-weight:normal;letter-spacing:0px;">总经理室</div>
<div class="r" style="left:204px;top:729.59px;width:19px;height:20.5px;background:#fff;border:1px solid #D6D6D6;border-radius:2px"></div>
<div class="t" style="left:229.60px;width:53.90px;text-align:center;top:732.89px;font-size:17px;line-height:17px;color:#111;font-weight:normal;letter-spacing:0px;">4</div>
<div class="t" style="left:288.37px;top:732.64px;font-size:16.3px;line-height:16.3px;color:#111;font-weight:normal;letter-spacing:0px;">中天科技</div>
<div class="t" style="left:422.86px;top:733.59px;font-size:16.8px;line-height:16.8px;color:#111;font-weight:normal;letter-spacing:0px;">2021–09–09</div>
<div class="t" style="left:557.37px;top:733.79px;font-size:16.4px;line-height:16.4px;color:#1430EE;font-weight:normal;letter-spacing:0px;"><span style="text-decoration:underline;text-underline-offset:2px">CGHT–20210</span>...</div>
<div class="t" style="left:691.67px;top:732.64px;font-size:16.3px;line-height:16.3px;color:#111;font-weight:normal;letter-spacing:0px;">审核通过</div>
<div class="t" style="left:825.87px;top:732.64px;font-size:16.3px;line-height:16.3px;color:#111;font-weight:normal;letter-spacing:0px;">万安智能设备...</div>
<div class="t" style="left:960.16px;top:733.59px;font-size:16.8px;line-height:16.8px;color:#111;font-weight:normal;letter-spacing:0px;">20210909–001</div>
<div class="t" style="left:1094.47px;top:732.64px;font-size:16.3px;line-height:16.3px;color:#111;font-weight:normal;letter-spacing:0px;">采购合同</div>
<div class="t" style="left:1363.07px;top:732.64px;font-size:16.3px;line-height:16.3px;color:#1430EE;font-weight:normal;letter-spacing:0px;"><span style="text-decoration:underline;text-underline-offset:2px">中万安智能有</span>...</div>
<div class="t" style="left:1497.37px;top:732.64px;font-size:16.3px;line-height:16.3px;color:#111;font-weight:normal;letter-spacing:0px;">曾丽萍</div>
<div class="t" style="left:1631.67px;top:732.64px;font-size:16.3px;line-height:16.3px;color:#111;font-weight:normal;letter-spacing:0px;">兰和翔</div>
<div class="t" style="left:1765.97px;top:732.64px;font-size:16.3px;line-height:16.3px;color:#111;font-weight:normal;letter-spacing:0px;">总经理室</div>
<div class="r" style="left:204px;top:766.90px;width:19px;height:20.5px;background:#fff;border:1px solid #D6D6D6;border-radius:2px"></div>
<div class="t" style="left:229.60px;width:53.90px;text-align:center;top:770.20px;font-size:17px;line-height:17px;color:#111;font-weight:normal;letter-spacing:0px;">5</div>
<div class="t" style="left:288.37px;top:769.95px;font-size:16.3px;line-height:16.3px;color:#111;font-weight:normal;letter-spacing:0px;">中天科技</div>
<div class="t" style="left:422.86px;top:770.90px;font-size:16.8px;line-height:16.8px;color:#111;font-weight:normal;letter-spacing:0px;">2021–09–09</div>
<div class="t" style="left:557.37px;top:771.10px;font-size:16.4px;line-height:16.4px;color:#1430EE;font-weight:normal;letter-spacing:0px;"><span style="text-decoration:underline;text-underline-offset:2px">CGHT–20210</span>...</div>
<div class="t" style="left:691.67px;top:769.95px;font-size:16.3px;line-height:16.3px;color:#111;font-weight:normal;letter-spacing:0px;">审核通过</div>
<div class="t" style="left:825.87px;top:769.95px;font-size:16.3px;line-height:16.3px;color:#111;font-weight:normal;letter-spacing:0px;">万安智能设备...</div>
<div class="t" style="left:960.16px;top:770.90px;font-size:16.8px;line-height:16.8px;color:#111;font-weight:normal;letter-spacing:0px;">20210909–001</div>
<div class="t" style="left:1094.47px;top:769.95px;font-size:16.3px;line-height:16.3px;color:#111;font-weight:normal;letter-spacing:0px;">采购合同</div>
<div class="t" style="left:1363.07px;top:769.95px;font-size:16.3px;line-height:16.3px;color:#1430EE;font-weight:normal;letter-spacing:0px;"><span style="text-decoration:underline;text-underline-offset:2px">中万安智能有</span>...</div>
<div class="t" style="left:1497.37px;top:769.95px;font-size:16.3px;line-height:16.3px;color:#111;font-weight:normal;letter-spacing:0px;">曾丽萍</div>
<div class="t" style="left:1631.67px;top:769.95px;font-size:16.3px;line-height:16.3px;color:#111;font-weight:normal;letter-spacing:0px;">兰和翔</div>
<div class="t" style="left:1765.97px;top:769.95px;font-size:16.3px;line-height:16.3px;color:#111;font-weight:normal;letter-spacing:0px;">总经理室</div>
<div class="r" style="left:204px;top:804.21px;width:19px;height:20.5px;background:#fff;border:1px solid #D6D6D6;border-radius:2px"></div>
<div class="t" style="left:229.60px;width:53.90px;text-align:center;top:807.50px;font-size:17px;line-height:17px;color:#111;font-weight:normal;letter-spacing:0px;">6</div>
<div class="t" style="left:288.37px;top:807.25px;font-size:16.3px;line-height:16.3px;color:#111;font-weight:normal;letter-spacing:0px;">中天科技</div>
<div class="t" style="left:422.86px;top:808.21px;font-size:16.8px;line-height:16.8px;color:#111;font-weight:normal;letter-spacing:0px;">2021–10–23</div>
<div class="t" style="left:557.37px;top:808.40px;font-size:16.4px;line-height:16.4px;color:#1430EE;font-weight:normal;letter-spacing:0px;"><span style="text-decoration:underline;text-underline-offset:2px">CGHT–202110</span>...</div>
<div class="t" style="left:691.67px;top:807.25px;font-size:16.3px;line-height:16.3px;color:#111;font-weight:normal;letter-spacing:0px;">审核通过</div>
<div class="t" style="left:825.87px;top:807.25px;font-size:16.3px;line-height:16.3px;color:#111;font-weight:normal;letter-spacing:0px;">建发·吾悦项目...</div>
<div class="t" style="left:1094.47px;top:807.25px;font-size:16.3px;line-height:16.3px;color:#111;font-weight:normal;letter-spacing:0px;">采购合同</div>
<div class="t" style="left:1228.77px;top:807.25px;font-size:16.3px;line-height:16.3px;color:#111;font-weight:normal;letter-spacing:0px;">建发·吾悦智能...</div>
<div class="t" style="left:1363.07px;top:807.25px;font-size:16.3px;line-height:16.3px;color:#1430EE;font-weight:normal;letter-spacing:0px;"><span style="text-decoration:underline;text-underline-offset:2px">福建易网科技</span>...</div>
<div class="t" style="left:1497.37px;top:807.25px;font-size:16.3px;line-height:16.3px;color:#111;font-weight:normal;letter-spacing:0px;">王华</div>
<div class="t" style="left:1631.67px;top:807.25px;font-size:16.3px;line-height:16.3px;color:#111;font-weight:normal;letter-spacing:0px;">凌燕英</div>
<div class="t" style="left:1765.97px;top:807.25px;font-size:16.3px;line-height:16.3px;color:#111;font-weight:normal;letter-spacing:0px;">总经理室</div>
<div class="r" style="left:204px;top:841.52px;width:19px;height:20.5px;background:#fff;border:1px solid #D6D6D6;border-radius:2px"></div>
<div class="t" style="left:229.60px;width:53.90px;text-align:center;top:844.82px;font-size:17px;line-height:17px;color:#111;font-weight:normal;letter-spacing:0px;">7</div>
<div class="t" style="left:288.37px;top:844.57px;font-size:16.3px;line-height:16.3px;color:#111;font-weight:normal;letter-spacing:0px;">中天科技</div>
<div class="t" style="left:422.86px;top:845.52px;font-size:16.8px;line-height:16.8px;color:#111;font-weight:normal;letter-spacing:0px;">2021–10–23</div>
<div class="t" style="left:557.37px;top:845.72px;font-size:16.4px;line-height:16.4px;color:#1430EE;font-weight:normal;letter-spacing:0px;"><span style="text-decoration:underline;text-underline-offset:2px">CGHT–202110</span>...</div>
<div class="t" style="left:691.67px;top:844.57px;font-size:16.3px;line-height:16.3px;color:#111;font-weight:normal;letter-spacing:0px;">审核通过</div>
<div class="t" style="left:825.87px;top:844.57px;font-size:16.3px;line-height:16.3px;color:#111;font-weight:normal;letter-spacing:0px;">建发·吾悦项目...</div>
<div class="t" style="left:1094.47px;top:844.57px;font-size:16.3px;line-height:16.3px;color:#111;font-weight:normal;letter-spacing:0px;">采购合同</div>
<div class="t" style="left:1228.77px;top:844.57px;font-size:16.3px;line-height:16.3px;color:#111;font-weight:normal;letter-spacing:0px;">建发·吾悦智能...</div>
<div class="t" style="left:1363.07px;top:844.57px;font-size:16.3px;line-height:16.3px;color:#1430EE;font-weight:normal;letter-spacing:0px;"><span style="text-decoration:underline;text-underline-offset:2px">福建易网科技</span>...</div>
<div class="t" style="left:1497.37px;top:844.57px;font-size:16.3px;line-height:16.3px;color:#111;font-weight:normal;letter-spacing:0px;">王华</div>
<div class="t" style="left:1631.67px;top:844.57px;font-size:16.3px;line-height:16.3px;color:#111;font-weight:normal;letter-spacing:0px;">凌燕英</div>
<div class="t" style="left:1765.97px;top:844.57px;font-size:16.3px;line-height:16.3px;color:#111;font-weight:normal;letter-spacing:0px;">总经理室</div>
<div class="t" style="left:245.32px;top:881.00px;font-size:17px;line-height:17px;color:#111;font-weight:bold;letter-spacing:0px;">汇总:</div>
<div class="r" style="left:197.00px;top:907.00px;width:1699.00px;height:8.70px;background:#EDEDED;border-bottom:1px solid #D9D9D9"></div>
<div class="r" style="left:197.00px;top:907.00px;width:680.00px;height:8.70px;background:#9A9A9A;border-radius:0 0 6px 6px"></div>
<div class="r" style="left:197.00px;top:915.70px;width:1699.00px;height:37.30px;background:#fff;border-radius:0 0 4px 4px"></div>
<div class="t" style="left:213.34px;top:926.25px;font-size:16.5px;line-height:16.5px;color:#555;font-weight:normal;letter-spacing:0px;">第</div>
<div class="t" style="left:231.60px;top:925.75px;font-size:17.5px;line-height:17.5px;color:#E8241C;font-weight:normal;letter-spacing:0px;">1</div>
<div class="t" style="left:244.04px;top:926.25px;font-size:16.5px;line-height:16.5px;color:#555;font-weight:normal;letter-spacing:0px;">页</div>
<div class="t" style="left:265.14px;top:926.25px;font-size:16.5px;line-height:16.5px;color:#555;font-weight:normal;letter-spacing:0px;">共</div>
<div class="t" style="left:284.40px;top:925.75px;font-size:17.5px;line-height:17.5px;color:#E8241C;font-weight:normal;letter-spacing:0px;">1</div>
<div class="t" style="left:296.04px;top:926.25px;font-size:16.5px;line-height:16.5px;color:#555;font-weight:normal;letter-spacing:0px;">页</div>
<div class="t" style="left:317.34px;top:926.25px;font-size:16.5px;line-height:16.5px;color:#555;font-weight:normal;letter-spacing:0.8px;">总计</div>
<div class="t" style="left:352.60px;top:925.75px;font-size:17.5px;line-height:17.5px;color:#E8241C;font-weight:normal;letter-spacing:0px;">7</div>
<div class="t" style="left:366.84px;top:926.25px;font-size:16.5px;line-height:16.5px;color:#555;font-weight:normal;letter-spacing:0px;">条</div>
<div class="r" style="left:391.30px;top:919.70px;width:44.00px;height:29.30px;background:#fff;border:1px solid #C8C8C8;border-radius:6px"></div>
<div class="t" style="left:391.30px;width:44.00px;text-align:center;top:926.25px;font-size:16.5px;line-height:16.5px;color:#333;font-weight:normal;letter-spacing:0px;">10</div>
<div class="t" style="left:447.32px;top:926.00px;font-size:17px;line-height:17px;color:#555;font-weight:normal;letter-spacing:1.2px;">条/页</div>
<div class="r" style="left:1439.50px;top:916.00px;width:56.00px;height:36.60px;background:linear-gradient(#62AEEB,#3D8FDC);"></div>
<div class="t" style="left:1439.50px;width:56.00px;text-align:center;top:926.05px;font-size:16.5px;line-height:16.5px;color:#fff;font-weight:normal;letter-spacing:0px;">首页</div>
<div class="r" style="left:1572.80px;top:916.50px;width:6.20px;height:36.10px;background:#E6E6E6;"></div>
<div class="r" style="left:1650.80px;top:916.50px;width:6.20px;height:36.10px;background:#E6E6E6;"></div>
<div class="r" style="left:1502.00px;top:916.50px;width:70.30px;height:36.10px;background:#fff;border:1px solid #DADADA"></div>
<div class="t" style="left:1502.00px;width:70.30px;text-align:center;top:926.05px;font-size:16.5px;line-height:16.5px;color:#333;font-weight:normal;letter-spacing:0px;">上一页</div>
<div class="r" style="left:1579.40px;top:916.50px;width:71.10px;height:36.10px;background:#fff;border:1px solid #DADADA"></div>
<div class="t" style="left:1579.40px;width:71.10px;text-align:center;top:926.05px;font-size:16.5px;line-height:16.5px;color:#333;font-weight:normal;letter-spacing:0px;">下一页</div>
<div class="r" style="left:1657.50px;top:916.50px;width:54.50px;height:36.10px;background:#fff;border:1px solid #DADADA"></div>
<div class="t" style="left:1657.50px;width:54.50px;text-align:center;top:926.05px;font-size:16.5px;line-height:16.5px;color:#333;font-weight:normal;letter-spacing:0px;">尾页</div>
<div class="r" style="left:1838.00px;top:916.50px;width:54.00px;height:36.10px;background:#fff;border:1px solid #DADADA"></div>
<div class="t" style="left:1838.00px;width:54.00px;text-align:center;top:926.05px;font-size:16.5px;line-height:16.5px;color:#333;font-weight:normal;letter-spacing:0px;">确定</div>
<div class="t" style="left:1718.34px;top:926.05px;font-size:16.5px;line-height:16.5px;color:#111;font-weight:normal;letter-spacing:0px;">转到</div>
<div class="r" style="left:1756.70px;top:919.50px;width:44.80px;height:30.00px;background:#fff;border:1px solid #D0D0D0;border-radius:7px"></div>
<div class="t" style="left:1756.70px;width:44.80px;text-align:center;top:926.05px;font-size:16.5px;line-height:16.5px;color:#333;font-weight:normal;letter-spacing:0px;">1</div>
<div class="t" style="left:1812.34px;top:926.05px;font-size:16.5px;line-height:16.5px;color:#111;font-weight:normal;letter-spacing:0px;">页</div>
<div class="r" style="left:944.00px;top:977.80px;width:282.00px;height:54.00px;background:#FFC22D;"></div>
<div class="t" style="left:971.02px;top:990.00px;font-size:32px;line-height:32px;color:#333;font-weight:normal;letter-spacing:0px;">采购合同明细表</div>
<div class="t" style="left:1750.17px;top:1010.05px;font-size:27.5px;line-height:27.5px;color:#7F7F7F;font-weight:normal;letter-spacing:3.7px;-webkit-text-stroke:0.9px #7F7F7F;transform:scaleX(0.86);transform-origin:0 0">52/71</div>
</body></html>
